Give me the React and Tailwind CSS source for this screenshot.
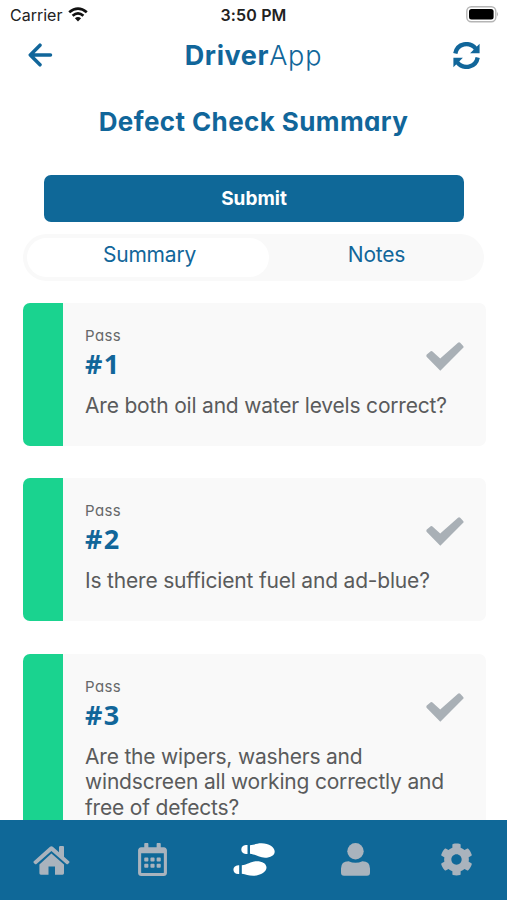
import { FaCog, FaRegCalendarAlt } from "react-icons/fa";

const checks = [
  { n: 1, lines: ["Are both oil and water levels correct?"], h: "h-[143px]" },
  { n: 2, lines: ["Is there sufficient fuel and ad-blue?"], h: "h-[143px]" },
  { n: 3, lines: ["Are the wipers, washers and", "windscreen all working correctly and", "free of defects?"], h: "h-[195px]" },
];

function Card({ item }) {
  return (
    <article className={`flex shrink-0 overflow-hidden rounded-[7px] bg-[#f9f9f9] ${item.h}`}>
      <div className="w-10 shrink-0 bg-[#1ad38f]" />
      <div className="flex min-w-0 flex-1 justify-between pl-[22px] pr-[22px] pt-[24px]">
        <div className="w-0">
          <p className="h-[18px] text-[15px] leading-[18px] tracking-[0.4px] text-[#66686a] [font-feature-settings:'cv11','ss03']">Pass</p>
          <p className="mt-[4px] h-[30px] text-[27px] font-bold leading-[30px] tracking-[1.2px] text-[#11669a] font-['Open_Sans',sans-serif]">#{item.n}</p>
          <div className="mt-[14px] text-[21px] leading-[25.7px] tracking-[-0.19px] text-[#5a5b5c]">
            {item.lines.map((t) => (
              <p key={t} className="whitespace-nowrap">{t}</p>
            ))}
          </div>
        </div>
        <svg viewBox="0 0 38 29" className="mt-[15px] h-[29px] w-[38px] shrink-0">
          <path d="M.8 12.5 4.7 9.3Q5.6 8.6 6.5 9.4L14.2 16.6 32 .7Q33.2-.1 34.2.8L37.2 3.9Q38 4.9 37.2 5.8L14.3 28.7.8 15Q-.1 13.6.8 12.5Z" fill="#a9b0b6" />
        </svg>
      </div>
    </article>
  );
}

export default function App() {
  return (
    <div className="flex h-[900px] w-[507px] flex-col overflow-hidden bg-white font-['Inter',sans-serif] text-[#11669a]">
      <div className="grid h-[30px] shrink-0 grid-cols-3 items-center pl-[10px] pr-[8px] text-[#222]">
        <div className="-mt-px flex items-center gap-[6px]">
          <span className="text-[16px] leading-none">Carrier</span>
          <svg viewBox="0 0 20 15" className="h-[15px] w-[20px]" fill="none" stroke="#111" strokeWidth="2.7">
            <path d="M1.2 5.3Q10-2.2 18.8 5.3M4.6 8.8Q10 4 15.4 8.8" />
            <path d="M6.9 11.3Q10 8.7 13.1 11.3L10 14.6Z" fill="#111" stroke="none" />
          </svg>
        </div>
        <span className="-ml-[2px] -mt-px text-center text-[16px] font-semibold leading-none tracking-[0.15px]">3:50 PM</span>
        <svg viewBox="0 0 33 17" className="-mt-[2px] h-[17px] w-[33px] justify-self-end">
          <rect x=".8" y=".8" width="29" height="15" rx="4.5" fill="#fff" stroke="#b5b5b5" strokeWidth="1.4" />
          <rect x="3" y="3" width="24.6" height="10.6" rx="2.5" fill="#000" />
          <path d="M31 6q2 2.2 0 4.5z" fill="#b5b5b5" />
        </svg>
      </div>

      <header className="flex h-[52px] shrink-0 items-center justify-between pl-[28px] pr-[27px]">
        <svg viewBox="0 0 25 24" className="-mt-[2px] h-6 w-[25px]" fill="none" stroke="currentColor" strokeWidth="3.5" strokeLinecap="round" strokeLinejoin="round">
          <path d="M12 2.2 2.3 12 12 21.8M2.8 12H22.5" />
        </svg>
        <h1 className="-mt-[2px] ml-px text-[27px] leading-none">
          <span className="font-bold tracking-[0.6px]">Driver</span><span className="font-light tracking-[0.8px]">App</span>
        </h1>
        <svg viewBox="0 0 27 27" className="-mt-[2px] h-[27px] w-[27px]" fill="none" stroke="currentColor" strokeWidth="4.3">
          <path d="M2.3 11.5C4.2 1.2 16.5-.8 22.7 6.6M24.7 15.5C22.8 25.8 10.5 27.8 4.3 20.4" />
          <path d="M26.6 1.8V11.3H17.1ZM.4 25.2V15.7H9.9Z" fill="currentColor" stroke="none" />
        </svg>
      </header>

      <h2 className="mt-[22px] h-[36px] shrink-0 text-center text-[26px] font-bold leading-[36px] tracking-[0.4px] [font-feature-settings:'cv11']">Defect Check Summary</h2>

      <button className="ml-[44px] mr-[43px] mt-[35px] h-[47px] shrink-0 rounded-[7px] bg-[#0f6898] pt-[2px] text-[19px] font-bold text-white">Submit</button>

      <div className="mx-[23px] mt-[12px] flex h-[47px] shrink-0 rounded-full bg-[#f9f9f9] p-[4px] text-[21px] tracking-[-0.2px]">
        <div className="flex w-[242px] items-center justify-center rounded-full bg-white pb-[6px] pl-[3px]">Summary</div>
        <div className="flex flex-1 items-center justify-center pb-[6px] pl-[4px]">Notes</div>
      </div>

      <main className="ml-[23px] mr-[21px] mt-[22px] flex min-h-0 flex-1 flex-col gap-[32.4px] overflow-hidden">
        {checks.map((c) => <Card key={c.n} item={c} />)}
      </main>

      <nav className="grid h-[80.5px] shrink-0 grid-cols-5 items-center justify-items-center bg-[#0f6898] text-[#a9b3bd]">
        <svg viewBox="0 0 37 30" className="ml-[2px] h-[30px] w-[37px]" fill="currentColor">
          <path d="M.8 16.2 17 1.8Q18.4.6 19.8 1.8L26 7.2V2.2Q26 1 27.2 1H30Q31 1 31 2.2V11.7L36.1 16.2Q37 17 36.2 17.8L35 19Q34.2 19.7 33.4 19L18.4 6 3.5 19Q2.7 19.7 1.9 19L.7 17.8Q0 17 .8 16.2Z" />
          <path d="M18.4 8.5 31 19.5V28.3Q31 29.7 29.6 29.7H22V21.5H15.5V29.7H7.8Q6.4 29.7 6.4 28.3V19.5Z" />
        </svg>
        <FaRegCalendarAlt className="ml-px h-[33px] w-[29px]" />
        <svg viewBox="0 0 42 33" className="ml-px h-[33px] w-[42px] text-white" fill="currentColor">
          <path d="M14.5 1.9H12.8C6.8 1.9 6.8 10.9 12.8 10.9H14.5ZM17 2.2C21 1.8 23.5.2 28.5.2C36 .2 41.7 4.3 41.7 8.4C41.7 12.3 37.5 14.7 32 14.7C26 14.7 22.8 11.3 17 10.7Z" />
          <path d="M6.2 22.3H5.3C-1.2 22.3-1.2 31.1 5.3 31.1H6.2ZM8.8 22.3C14.6 21.7 17.8 18.3 23.8 18.3C29.3 18.3 33.5 20.7 33.5 24.6C33.5 28.7 27.8 32.8 20.3 32.8C15.3 32.8 12.8 31.2 8.8 30.8Z" />
        </svg>
        <svg viewBox="0 0 29 33" className="ml-px h-[33px] w-[29px]" fill="currentColor">
          <circle cx="14.5" cy="8.3" r="8.2" />
          <path d="M0 29.5V25.5Q0 18.2 7.6 18.2 14.5 21.2 21.4 18.2 29 18.2 29 25.5V29.5Q29 32.7 26 32.7H3Q0 32.7 0 29.5Z" />
        </svg>
        <FaCog className="h-[33px] w-[33px]" />
      </nav>
    </div>
  );
}
